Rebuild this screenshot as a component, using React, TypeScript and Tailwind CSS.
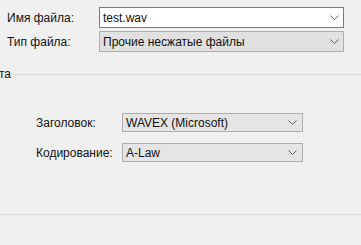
const Chevron: React.FC = () => (
  <svg width="9" height="5" viewBox="0 0 9 5" className="shrink-0">
    <polyline points="0.5,0.5 4.5,4.5 8.5,0.5" fill="none" stroke="#606060" strokeWidth="1" />
  </svg>
);

const Combo: React.FC<{ text: string; className: string; chevronPad: string }> = ({ text, className, chevronPad }) => (
  <div className={`flex items-center justify-between border pl-[3px] ${chevronPad} ${className}`}>
    <span className="leading-none whitespace-nowrap">{text}</span>
    <Chevron />
  </div>
);

export default function App() {
  return (
    <div
      className="w-[361px] h-[245px] bg-[#f0f0f0] overflow-hidden text-[12px] text-[#111] flex flex-col"
      style={{ fontFamily: '"Liberation Sans", Arial, sans-serif' }}
    >
      {/* file name */}
      <div className="flex items-center pl-[7px] mt-[7px]">
        <span className="w-[92px]">Имя файла:</span>
        <Combo text="test.wav" className="w-[245px] h-[21px] bg-white border-[#7a7a7a]" chevronPad="pr-[4px]" />
      </div>
      {/* file type */}
      <div className="flex items-center pl-[7px] mt-[3px]">
        <span className="w-[92px]">Тип файла:</span>
        <Combo text="Прочие несжатые файлы" className="w-[245px] h-[21px] bg-[#e1e1e1] border-[#adadad]" chevronPad="pr-[4px]" />
      </div>

      {/* group box title */}
      <div className="flex items-center h-[16px] mt-[14px]">
        <span className="ml-[-1px]">та</span>
        <div className="flex-1 h-px bg-[#dcdcdc] ml-[2px]" />
      </div>

      <div className="flex items-center pl-[36px] mt-[31px]">
        <span className="w-[86px]">Заголовок:</span>
        <Combo text="WAVEX (Microsoft)" className="w-[181px] h-[19px] bg-[#e5e5e5] border-[#adadad]" chevronPad="pr-[5px]" />
      </div>
      <div className="flex items-center pl-[36px] mt-[11px]">
        <span className="w-[86px]">Кодирование:</span>
        <Combo text="A-Law" className="w-[181px] h-[19px] bg-[#e5e5e5] border-[#adadad]" chevronPad="pr-[5px]" />
      </div>

      <div className="h-px bg-[#d9d9d9] mt-[52px]" />
    </div>
  );
}
